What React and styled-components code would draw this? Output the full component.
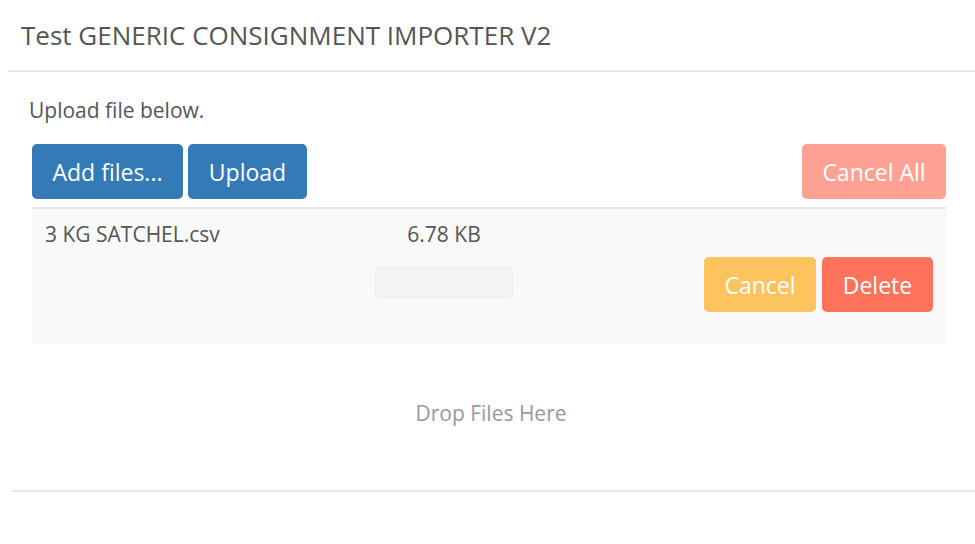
import React from "react";
import styled, { createGlobalStyle } from "styled-components";

const Global = createGlobalStyle`
  html, body { margin: 0; padding: 0; background: #fff; }
  body { font-family: "Open Sans", "Noto Sans", sans-serif; color: #555; }
`;

const Page = styled.div`
  width: 975px;
  height: 544px;
  overflow: hidden;
`;

const Header = styled.div`
  margin-left: 8px;
  height: 72px;
  border-bottom: 2px solid #e8e8e8;
  display: flex;
  align-items: center;
  padding-left: 13px;
  box-sizing: border-box;
`;

const Title = styled.h4`
  margin: 0;
  margin-top: -1px;
  font-size: 26px;
  font-weight: 400;
  color: #555;
  letter-spacing: 0;
`;

const Body = styled.div`
  padding: 24px 29px 0 32px;
`;

const Intro = styled.p`
  margin: 0 0 0 -3px;
  font-size: 21px;
  line-height: 28px;
  color: #555;
`;

const Toolbar = styled.div`
  display: flex;
  align-items: center;
  gap: 5px;
  margin-top: 20px;
`;

const Spacer = styled.div`
  flex: 1;
`;

const Button = styled.button`
  font-family: "Open Sans", "Noto Sans", sans-serif;
  font-size: 23px;
  font-weight: 400;
  color: #fff;
  background: ${(p) => p.$bg};
  border: none;
  border-radius: 5px;
  height: 55px;
  width: ${(p) => p.$w}px;
  padding: 0;
  display: flex;
  align-items: center;
  justify-content: center;
`;

const FileRow = styled.div`
  margin-top: 8px;
  border-top: 2px solid #e6e6e6;
  background: #f9f9f9;
  height: 136px;
  box-sizing: border-box;
  display: flex;
  padding: 11px 13px 0 13px;
`;

const NameCell = styled.div`
  width: 330px;
  font-size: 21px;
  line-height: 28px;
  color: #555;
`;

const SizeCell = styled.div`
  width: 138px;
  display: flex;
  flex-direction: column;
  align-items: center;
  font-size: 21px;
  line-height: 28px;
  color: #555;
`;

const Progress = styled.div`
  margin-top: 19px;
  width: 138px;
  height: 31px;
  box-sizing: border-box;
  border-radius: 5px;
  background: #f3f3f3;
  border: 1px solid #ececec;
`;

const Actions = styled.div`
  display: flex;
  gap: 6px;
  padding-top: 37px;
`;

const DropZone = styled.div`
  height: 147px;
  padding-bottom: 8px;
  box-sizing: border-box;
  display: flex;
  align-items: center;
  justify-content: center;
  font-size: 21px;
  color: #999;
  margin-left: 4px;
`;

const Footer = styled.div`
  margin-left: 12px;
  border-top: 2px solid #e5e5e5;
`;

export default function App() {
  return (
    <Page>
      <Global />
      <Header>
        <Title>Test GENERIC CONSIGNMENT IMPORTER V2</Title>
      </Header>
      <Body>
        <Intro>Upload file below.</Intro>
        <Toolbar>
          <Button $bg="#337ab7" $w={151}>Add files...</Button>
          <Button $bg="#337ab7" $w={119}>Upload</Button>
          <Spacer />
          <Button $bg="#ffa193" $w={144}>Cancel All</Button>
        </Toolbar>
        <FileRow>
          <NameCell>3 KG SATCHEL.csv</NameCell>
          <SizeCell>
            6.78 KB
            <Progress />
          </SizeCell>
          <Spacer />
          <Actions>
            <Button $bg="#fcc35f" $w={112}>Cancel</Button>
            <Button $bg="#ff735a" $w={111}>Delete</Button>
          </Actions>
        </FileRow>
        <DropZone>Drop Files Here</DropZone>
      </Body>
      <Footer />
    </Page>
  );
}
